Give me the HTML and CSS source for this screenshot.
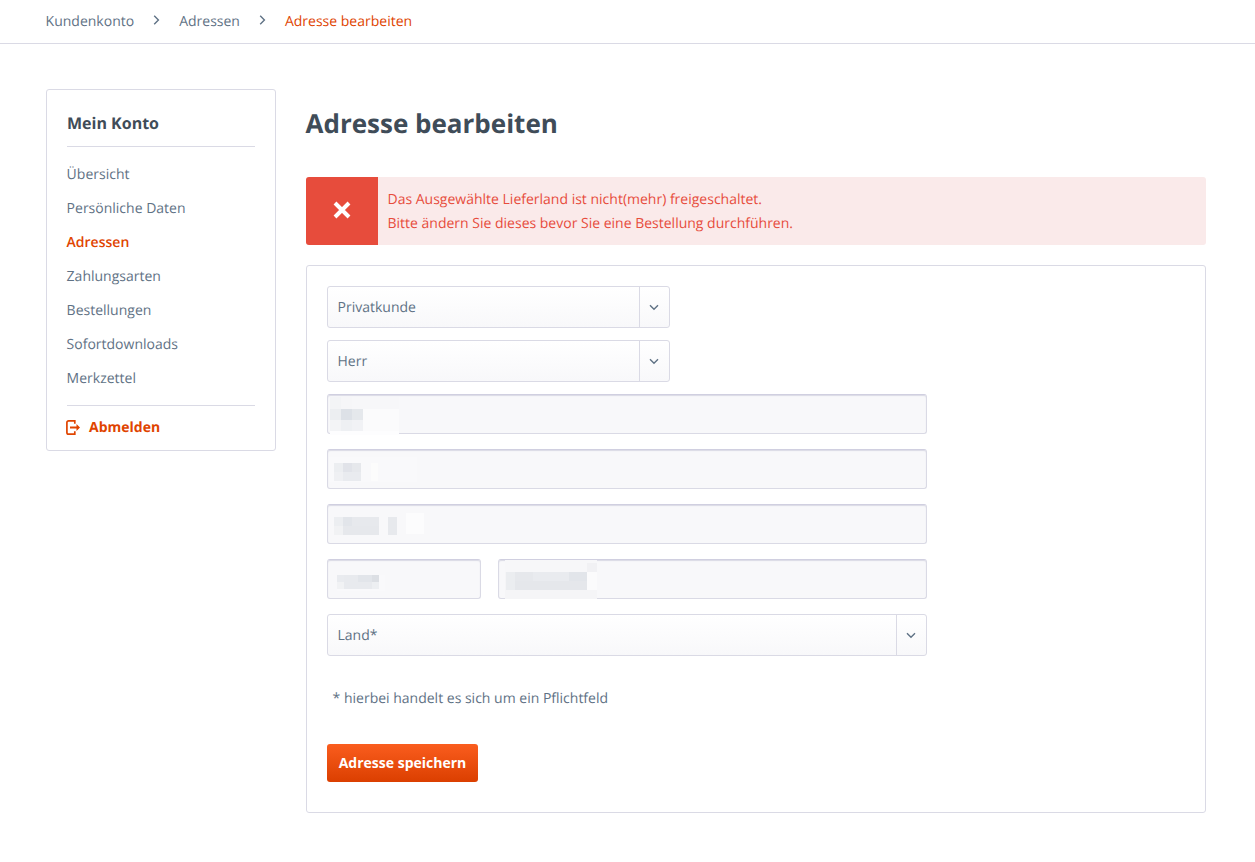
FILE: index.html
```html
<!DOCTYPE html>
<html lang="de">
<head>
  <meta charset="UTF-8" />
  <meta name="viewport" content="width=device-width, initial-scale=1" />
  <title>Adresse bearbeiten</title>
  <link rel="stylesheet" href="styles.css">
</head>
<body>
  <nav class="breadcrumb">
    <a href="#">Kundenkonto</a>
    <svg class="crumb-arrow" viewBox="0 0 7 10"><path d="M1.200 .8l4.200 4.200-4.200 4.200" /></svg>
    <a href="#">Adressen</a>
    <svg class="crumb-arrow" viewBox="0 0 7 10"><path d="M1.200 .8l4.200 4.200-4.200 4.200" /></svg>
    <a href="#" class="current">Adresse bearbeiten</a>
  </nav>

  <div class="page">
    <aside class="sidebar">
      <h2>Mein Konto</h2>
      <ul class="side-menu">
        <li><a href="#">Übersicht</a></li>
        <li><a href="#">Persönliche Daten</a></li>
        <li><a href="#" class="active">Adressen</a></li>
        <li><a href="#">Zahlungsarten</a></li>
        <li><a href="#">Bestellungen</a></li>
        <li><a href="#">Sofortdownloads</a></li>
        <li><a href="#">Merkzettel</a></li>
      </ul>
      <a href="#" class="logout">
        <svg viewBox="0 0 15 15">
          <path class="logout-door" d="M8.800 3.800V.9H2.600A1.700 1.700 0 0 0 .9 2.600v9.800a1.700 1.700 0 0 0 1.700 1.700h6.200v-2.900" />
          <path class="logout-arrow" d="M4 6.500h6.500V4L14 7.500 10.500 11V8.500H4z" />
        </svg>
        Abmelden
      </a>
    </aside>

    <main class="content">
      <h1>Adresse bearbeiten</h1>

      <div class="alert">
        <div class="alert-icon">
          <svg viewBox="0 0 18 18"><path d="M2 2l14 14M16 2L2 16" /></svg>
        </div>
        <div class="alert-text">
          Das Ausgewählte Lieferland ist nicht(mehr) freigeschaltet.<br>
          Bitte ändern Sie dieses bevor Sie eine Bestellung durchführen.
        </div>
      </div>

      <form class="panel">
        <div class="select short">
          <span class="select-value">Privatkunde</span>
          <span class="select-arrow"><svg viewBox="0 0 10 7"><path d="M1 1.200l4 4 4-4" /></svg></span>
        </div>
        <div class="select short">
          <span class="select-value">Herr</span>
          <span class="select-arrow"><svg viewBox="0 0 10 7"><path d="M1 1.200l4 4 4-4" /></svg></span>
        </div>

        <div class="field">
          <input type="text" />
          <svg class="mosaic" style="left:3px;top:3px" width="69" height="38">
            <rect width="69" height="38" fill="#fbfbfc" />
            <rect width="11" height="12" fill="#f3f4f6" />
            <rect x="11" width="11" height="12" fill="#f6f6f8" />
            <rect x="22" width="47" height="12" fill="#f7f7f9" />
            <rect y="12" width="11" height="11" fill="#eceef1" />
            <rect x="11" y="12" width="11" height="11" fill="#dde1e7" />
            <rect x="22" y="12" width="11" height="11" fill="#e5e8ec" />
            <rect y="23" width="11" height="11" fill="#f3f4f6" />
            <rect x="11" y="23" width="11" height="11" fill="#eef0f3" />
            <rect x="22" y="23" width="11" height="11" fill="#f1f2f5" />
            <rect y="34" width="69" height="4" fill="#fdfdfe" />
          </svg>
        </div>
        <div class="field">
          <input type="text" />
          <svg class="mosaic" style="left:2px;top:8px" width="88" height="25">
            <rect width="88" height="25" fill="#f9f9fb" />
            <rect x="5" y="6" width="9" height="9" fill="#eceef1" />
            <rect x="14" y="6" width="9" height="9" fill="#e1e3e9" />
            <rect x="23" y="6" width="9" height="9" fill="#e6e8ec" />
            <rect x="5" y="15" width="9" height="9" fill="#eff0f3" />
            <rect x="14" y="15" width="9" height="9" fill="#e9ebef" />
            <rect x="23" y="15" width="9" height="9" fill="#e9ebef" />
            <rect x="42" y="6" width="7" height="18" fill="#fcfcfc" />
          </svg>
        </div>
        <div class="field">
          <input type="text" />
          <svg class="mosaic" style="left:7px;top:8px" width="92" height="24">
            <rect width="92" height="24" fill="#f8f8fa" />
            <rect y="5" width="9" height="9" fill="#eceef1" />
            <rect x="9" y="5" width="9" height="9" fill="#e2e5ea" />
            <rect x="18" y="5" width="27" height="9" fill="#e7e9ed" />
            <rect y="14" width="9" height="9" fill="#f1f2f4" />
            <rect x="9" y="14" width="36" height="9" fill="#e6e8ec" />
            <rect x="54" y="5" width="9" height="18" fill="#e7e9ed" />
            <rect x="72" y="1" width="18" height="21" fill="#fcfcfd" />
          </svg>
        </div>
        <div class="field-row">
          <div class="field zip">
            <input type="text" />
            <svg class="mosaic" style="left:10px;top:16px" width="48" height="16">
              <rect width="48" height="16" fill="#f9f9fb" />
              <rect width="7" height="7" fill="#e9ebef" />
              <rect x="7" width="14" height="7" fill="#e8eaee" />
              <rect x="21" width="14" height="7" fill="#e2e5ea" />
              <rect x="35" width="7" height="7" fill="#dcdfe4" />
              <rect y="7" width="7" height="7" fill="#f1f2f4" />
              <rect x="7" y="7" width="28" height="7" fill="#e8eaee" />
              <rect x="35" y="7" width="7" height="7" fill="#edeff2" />
            </svg>
          </div>
          <div class="field city">
            <input type="text" />
            <svg class="mosaic" style="left:7px;top:1px" width="92" height="39">
              <rect width="92" height="39" fill="#f5f5f7" />
              <rect width="92" height="12" fill="#f7f7f9" />
              <rect x="1" y="12" width="9" height="18" fill="#ebedf0" />
              <rect x="10" y="12" width="18" height="9" fill="#e6e8ec" />
              <rect x="28" y="12" width="9" height="9" fill="#e9ebef" />
              <rect x="37" y="12" width="27" height="9" fill="#e9ebef" />
              <rect x="64" y="12" width="18" height="9" fill="#e2e5ea" />
              <rect x="10" y="21" width="72" height="9" fill="#e5e7eb" />
              <rect x="82" y="12" width="10" height="18" fill="#fbfbfc" />
              <rect x="82" y="3" width="10" height="9" fill="#f1f1f4" />
            </svg>
          </div>
        </div>
        <div class="select wide">
          <span class="select-value">Land*</span>
          <span class="select-arrow"><svg viewBox="0 0 10 7"><path d="M1 1.200l4 4 4-4" /></svg></span>
        </div>

        <p class="note">* hierbei handelt es sich um ein Pflichtfeld</p>

        <button type="button" class="btn-save">Adresse speichern</button>
      </form>
    </main>
  </div>
</body>
</html>
```

FILE: styles.css
```css
* {
  box-sizing: border-box;
}
body {
  margin: 0;
  font-family: "Open Sans", "Liberation Sans", sans-serif;
  font-size: 14px;
  line-height: 24px;
  background: #fff;
  color: #5f7285;
  text-rendering: geometricPrecision;
}
a {
  color: inherit;
  text-decoration: none;
}

.breadcrumb {
  height: 44px;
  padding: 0 0 0 45.6px;
  display: flex;
  align-items: center;
  border-bottom: 1px solid #dadae5;
}
.breadcrumb .current {
  color: #e04400;
}
.crumb-arrow {
  width: 7px;
  height: 10px;
  margin: -3px 19px 0 19px;
  fill: none;
  stroke: #5f7285;
  stroke-width: 1.4;
}

.page {
  display: flex;
  gap: 30px;
  padding: 45px 49px 0 46px;
}

.sidebar {
  flex: 0 0 230px;
  align-self: flex-start;
  height: 362px;
  padding: 21px 20px 0;
  border: 1px solid #dadae5;
  border-radius: 3px;
}
.sidebar h2 {
  margin: 0;
  padding-bottom: 11px;
  font-size: 16px;
  line-height: 24px;
  font-weight: 700;
  color: #3f4c58;
  border-bottom: 1px solid #dadae5;
}
.side-menu {
  list-style: none;
  margin: 0;
  padding: 11px 0 9px;
  border-bottom: 1px solid #dadae5;
}
.side-menu li {
  height: 34px;
  line-height: 34px;
  text-indent: -0.4px;
}
.side-menu .active {
  color: #e04400;
  font-weight: 600;
}
.logout {
  display: flex;
  align-items: center;
  gap: 8px;
  height: 44px;
  margin-left: -1px;
  color: #e04400;
  font-weight: 700;
}
.logout svg {
  width: 15px;
  height: 15px;
  margin-top: -2px;
  fill: none;
  stroke: #e04400;
  stroke-width: 1.700;
}
.logout-arrow {
  fill: #e04400;
  stroke: none;
}

.content {
  flex: 1;
  min-width: 0;
}
.content h1 {
  margin: 0 0 0 -0.5px;
  height: 88px;
  font-size: 26px;
  line-height: 68px;
  font-weight: 700;
  color: #3f4c58;
}

.alert {
  display: flex;
  height: 68px;
  margin-bottom: 20px;
  border-radius: 3px;
  overflow: hidden;
  background: #faeaea;
  color: #e74c3c;
}
.alert-icon {
  flex: 0 0 72px;
  display: flex;
  align-items: center;
  justify-content: center;
  background: #e74c3c;
}
.alert-icon svg {
  width: 18px;
  height: 18px;
  margin-top: -2px;
  fill: none;
  stroke: #fff;
  stroke-width: 4;
}
.alert-text {
  padding: 11px 10px 9px 9.5px;
}

.panel {
  height: 548px;
  padding: 20px;
  border: 1px solid #dadae5;
  border-radius: 3px;
}

.select {
  display: flex;
  height: 42px;
  margin-bottom: 12px;
  border: 1px solid #dadae5;
  border-radius: 3px;
  background: linear-gradient(to bottom, #fff, #f8f8fa);
}
.select.short {
  width: 343px;
}
.select.wide {
  width: 600px;
  margin-bottom: 0;
}
.select-value {
  flex: 1;
  padding-left: 9.5px;
  line-height: 42px;
}
.select-arrow {
  flex: 0 0 30px;
  display: flex;
  align-items: center;
  justify-content: center;
  padding-right: 2px;
  border-left: 1px solid #dadae5;
}
.select-arrow svg {
  width: 10px;
  height: 7px;
  fill: none;
  stroke: #5f7285;
  stroke-width: 1.400;
}

.field {
  position: relative;
  width: 600px;
  height: 40px;
  margin-bottom: 15px;
}
.field input {
  display: block;
  width: 100%;
  height: 100%;
  border: 1px solid #dadae5;
  border-top-color: #d0cfe0;
  border-radius: 3px;
  background: #f8f8fa;
  box-shadow: inset 0 1px 1px #dadae5;
  outline: none;
}
.mosaic {
  position: absolute;
}
.field-row {
  display: flex;
  justify-content: space-between;
  width: 600px;
}
.field.zip {
  width: 154px;
}
.field.city {
  width: 429px;
}

.note {
  margin: 31px 0 33px 5.6px;
}

.btn-save {
  display: block;
  width: 151px;
  height: 38px;
  padding: 0 0 2px;
  border: none;
  border-radius: 3px;
  background: linear-gradient(to bottom, #fa5d1e, #db3f00);
  color: #fff;
  font-family: inherit;
  font-size: 14px;
  font-weight: 700;
}
```
